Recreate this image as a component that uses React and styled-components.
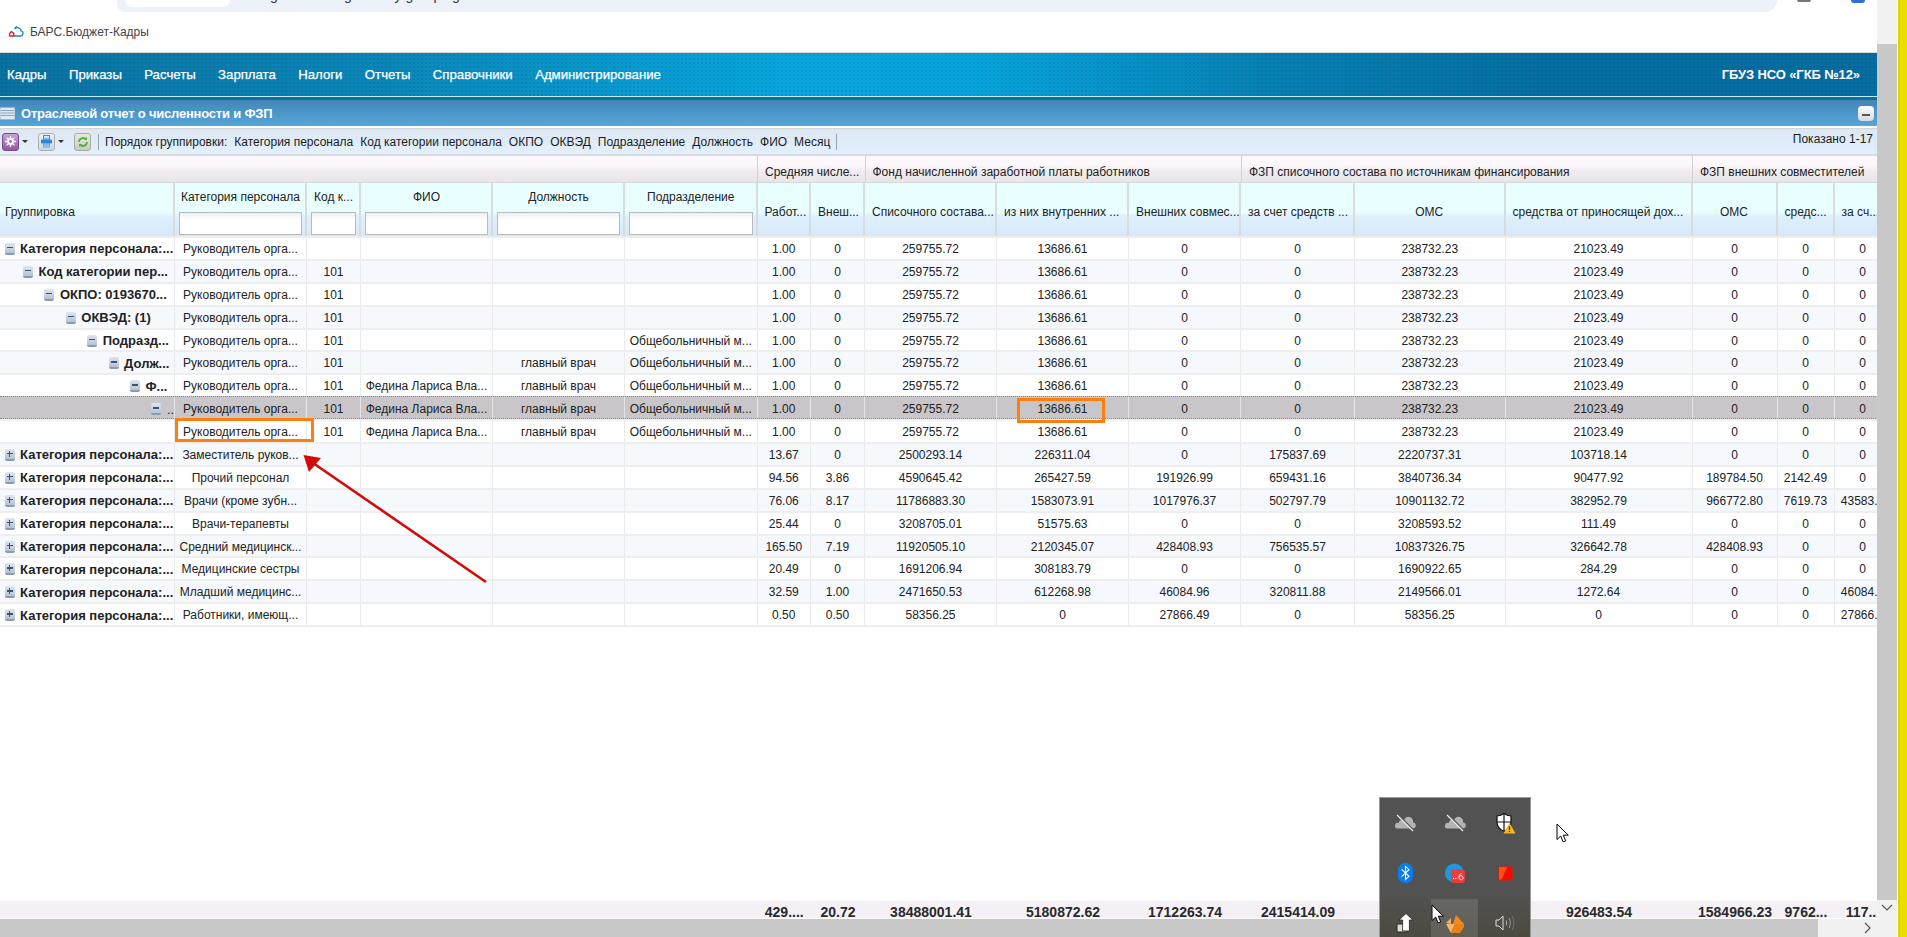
import React from 'react';
import styled, { createGlobalStyle } from 'styled-components';

const GRID = '175px 132px 54px 132px 132px 132.5px 53.5px 54px 132px 132px 112px 114px 150.5px 187px 85px 57px 57px';

const GlobalStyle = createGlobalStyle`
  html, body { margin: 0; padding: 0; height: 100%; overflow: hidden; background: #fff; }
  body { font-family: "Liberation Sans", Arial, sans-serif; font-size: 12px; color: #222; }
  * { box-sizing: border-box; }
`;

const Page = styled.div`
  position: relative;
  display: flex;
  width: 1907px;
  height: 937px;
  overflow: hidden;
`;
const Main = styled.div`
  display: flex;
  flex-direction: column;
  width: 1877px;
  height: 100%;
  overflow: hidden;
`;

const BrowserBar = styled.div`
  display: flex;
  height: 12px;
  flex: none;
  padding-left: 117px;
  overflow: hidden;
`;
const UrlPill = styled.div`
  display: flex;
  flex: none;
  width: 1660px;
  height: 12px;
  padding-left: 8px;
  background: #edf2fa;
  border-radius: 0 0 18px 12px;
  overflow: hidden;
`;
const UrlChip = styled.div`
  width: 105px;
  height: 7px;
  background: #fff;
  border-radius: 0 0 10px 10px;
`;
const UrlText = styled.div`
  margin: -15px 0 0 40px;
  font-size: 14px;
  line-height: 20px;
  color: #333;
  white-space: nowrap;
`;
const BarStub = styled.span`
  flex: none;
  width: 14px;
  height: ${p => p.$h}px;
  margin-left: ${p => p.$gap}px;
  background: ${p => p.$c};
  border-radius: 0 0 5px 5px;
`;

const AppTitle = styled.div`
  display: flex;
  align-items: center;
  gap: 6px;
  flex: none;
  height: 41px;
  padding: 0 0 0 8px;
  font-size: 12px;
  color: #444;
  border-bottom: 1px solid #d8d8d8;
`;

const Nav = styled.nav`
  display: flex;
  align-items: center;
  flex: none;
  height: 44px;
  padding: 0 17px 0 7px;
  gap: 22.4px;
  color: #fff;
  font-size: 13.2px;
  -webkit-text-stroke: 0.25px #fff;
  background:
    radial-gradient(rgba(0, 0, 0, 0.08) 1px, transparent 1.2px) 0 0 / 4px 4px,
    linear-gradient(90deg, #0a72a0 0%, #0a86b8 20%, #07a6de 42%, #05a4dc 52%, #0780b4 68%, #056fa3 82%, #056da0 100%);
  border-bottom: 1px solid #bff0ff;
`;
const NavOrg = styled.span`
  margin-left: auto;
  font-size: 13px;
  font-weight: 700;
  letter-spacing: -0.1px;
  -webkit-text-stroke: 0;
`;

const PanelTitle = styled.div`
  display: flex;
  align-items: center;
  gap: 6px;
  flex: none;
  height: 29px;
  padding: 3px 3px 0 0;
  color: #fff;
  font-size: 13px;
  font-weight: 700;
  letter-spacing: -0.2px;
  background: linear-gradient(180deg, #0e6f9e 0, #0e6f9e 3px, #4486b9 3px, #55a6d8 100%);
`;
const CollapseBtn = styled.div`
  display: flex;
  align-items: center;
  justify-content: center;
  margin-left: auto;
  width: 16px;
  height: 15px;
  border-radius: 4px;
  background: linear-gradient(180deg, #fff, #d6d8dc);
  &::before { content: ''; width: 8px; height: 2px; margin-top: 3px; background: #555; }
`;

const Toolbar = styled.div`
  display: flex;
  align-items: center;
  flex: none;
  height: 28px;
  margin-top: 2px;
  padding: 0 4px 0 2px;
  font-size: 12px;
  color: #1c1c1c;
  border-top: 1px solid #cfd6dc;
  border-bottom: 2px solid #d6dbe0;
  background: linear-gradient(180deg, #dce7f2, #e3f0fe);
`;
const ToolButton = styled.div`
  display: flex;
  align-items: center;
  justify-content: center;
  width: 17px;
  height: 18px;
  border-radius: 3px;
  border: 1px solid ${p => p.$edge};
  background: ${p => p.$bg};
`;
const Caret = styled.span`
  width: 0;
  height: 0;
  margin: 0 ${p => p.$after}px 0 3px;
  border-left: 3px solid transparent;
  border-right: 3px solid transparent;
  border-top: 3px solid #333;
`;
const ToolSep = styled.span`
  width: 1px;
  height: 16px;
  margin: ${p => p.$margin};
  background: #9aa4ac;
`;
const GroupLabel = styled.span`
  margin-right: 7px;
  white-space: nowrap;
`;
const Shown = styled.span`
  margin-left: auto;
  margin-top: -5px;
`;

const GridRow = styled.div`
  display: grid;
  grid-template-columns: ${GRID};
  width: 1890px;
  flex: none;
`;
const BandRow = styled.div`
  display: flex;
  flex: none;
  width: 1890px;
  height: 26px;
  background: linear-gradient(180deg, #fdf8fd 0%, #fbf7fb 35%, #efebef 60%, #e9e6ea 100%);
`;
const Band = styled.div`
  display: flex;
  align-items: center;
  width: ${p => p.$w}px;
  padding: 6px 0 0 7px;
  white-space: nowrap;
  overflow: hidden;
  border-left: ${p => (p.$first ? 'none' : '1px solid #d2d2d6')};
`;
const HeadRow = styled(GridRow)`
  height: 54px;
  border-top: 1px solid #d4d8dc;
  background: linear-gradient(180deg, #e9ffff 0%, #e9ffff 55%, #dff1ff 62%, #d8e8f8 100%);
`;
const HeadCell = styled.div`
  display: flex;
  flex-direction: column;
  align-items: ${p => (p.$center ? 'center' : 'flex-start')};
  justify-content: center;
  padding: 4px 0 0 ${p => (p.$plain ? '5px' : p.$left ? '7px' : '0')};
  border-right: 2px solid #d8dcde;
  overflow: hidden;
  white-space: nowrap;
`;
const FilterCell = styled(HeadCell)`
  align-items: stretch;
  justify-content: flex-start;
  padding: 0 3px 0 4px;
  text-align: center;
`;
const FilterLabel = styled.div`
  height: 29px;
  line-height: 29px;
  overflow: hidden;
`;
const FilterInput = styled.div`
  height: 23px;
  border: 1px solid #b8bcc0;
  background: linear-gradient(180deg, #eceef0 0, #fff 7px);
`;

const DataRow = styled(GridRow)`
  height: 22.9px;
  align-items: stretch;
  border-top: 2px solid #eeeeee;
  background: ${p => (p.$selected ? '#c9c6ca' : p.$alt ? '#f5f8fc' : '#fff')};
  ${p => p.$selected && 'border-top: 1px dotted #888; border-bottom: 1px dotted #888;'}
`;
const Cell = styled.div`
  display: flex;
  align-items: center;
  justify-content: center;
  padding-top: ${p => (p.$selected ? 3 : 1)}px;
  border-right: 1px solid ${p => (p.$selected ? '#e4e4e6' : '#e9eaec')};
  white-space: nowrap;
  overflow: hidden;
`;
const GroupCell = styled(Cell)`
  justify-content: flex-start;
  gap: 5.5px;
  font-size: 13px;
  font-weight: ${p => (p.$leaf ? 400 : 700)};
`;
const TreeBox = styled.span`
  position: relative;
  display: block;
  flex: none;
  width: 10px;
  height: 12px;
  border-radius: 2px;
  border-bottom: 2px solid #8a9ab0;
  background: linear-gradient(180deg, #dfe5ee, #b6c3d4);
  &::before {
    content: '';
    position: absolute;
    left: 2px;
    top: 4px;
    width: 6px;
    height: 1.5px;
    background: #3d5470;
  }
  &::after {
    content: '';
    position: absolute;
    left: 4.3px;
    top: 2px;
    width: 1.5px;
    height: 6px;
    background: #3d5470;
    display: ${p => (p.$open ? 'none' : 'block')};
  }
`;

const Spacer = styled.div`
  flex: 1;
  border-top: 2px solid #eeeeee;
`;
const TotalsRow = styled(GridRow)`
  height: 17px;
  padding-top: 5px;
  align-items: center;
  background: #f5f0f5;
  font-size: 14px;
  font-weight: 700;
  color: #2a2a2a;
`;
const TotalCell = styled.div`
  text-align: center;
  white-space: nowrap;
  overflow: hidden;
`;
const HScroll = styled.div`
  display: flex;
  flex: none;
  height: 18px;
  margin-top: 1px;
  background: #f1f1f1;
`;
const HThumb = styled.div`
  width: 1818px;
  background: #c8c8c8;
`;
const HArrow = styled.div`
  display: flex;
  align-items: center;
  justify-content: flex-end;
  flex: 1;
  padding-right: 6px;
`;

const VScroll = styled.div`
  display: flex;
  flex-direction: column;
  flex: none;
  width: 20px;
  height: 100%;
  background: #f1f1f1;
`;
const VThumb = styled.div`
  height: 856px;
  margin-top: 44px;
  background: #c8c8c8;
`;
const VArrow = styled.div`
  display: flex;
  justify-content: center;
  padding-top: 4px;
`;
const Edge = styled.div`
  flex: none;
  width: 10px;
  border-left: 1px solid #fff;
  background: linear-gradient(90deg, #d8cc00, #eadf00 30%);
`;

const Mark = styled.div`
  position: absolute;
  left: ${p => p.$x}px;
  top: ${p => p.$y}px;
  width: ${p => p.$w}px;
  height: ${p => p.$h}px;
  border: 3px solid #ff7f0e;
`;
const Overlay = styled.svg`
  position: absolute;
  left: 0;
  top: 0;
  pointer-events: none;
`;

const Tray = styled.div`
  position: absolute;
  left: 1379px;
  top: 797px;
  display: grid;
  grid-template-columns: repeat(3, 50px);
  grid-auto-rows: 50px;
  width: 152px;
  height: 160px;
  border: 1px solid #999;
  border-bottom: none;
  background: linear-gradient(180deg, #525252 0, #525252 92px, #4c4a40 140px);
`;
const TrayCell = styled.div`
  display: flex;
  align-items: center;
  justify-content: center;
  background: ${p => (p.$hover ? 'rgba(255, 255, 255, 0.12)' : 'transparent')};
  ${p => p.$hover && 'margin: 1px 2px 0 1px; height: 50px;'}
`;

const Logo = () => (
  <svg width="16" height="14" viewBox="0 0 16 14" fill="none">
    <path d="M5.5 11h7a2.6 2.6 0 0 0 .6-5.1A3.6 3.6 0 0 0 6.6 4.2" stroke="#1a86cc" strokeWidth="1.3" />
    <path d="M6.6 3.5 L9 1.3" stroke="#1a86cc" strokeWidth="1.2" />
    <path d="M3.5 6.5 5.7 8.4V11H1.6V8.4Z" stroke="#e0202a" strokeWidth="1.4" strokeLinejoin="round" />
  </svg>
);

const TableIcon = () => (
  <svg width="15" height="13" viewBox="0 0 15 13">
    <rect x="0" y="0.5" width="15" height="12" rx="1" fill="#dfe9f3" stroke="#9eb6cc" />
    <path d="M1 3.5h13M1 6h13M1 8.5h13" stroke="#8fa5bb" strokeWidth="1" />
  </svg>
);

const CogGlyph = () => (
  <svg width="11" height="11" viewBox="0 0 11 11">
    <circle cx="5.5" cy="5.5" r="3.4" fill="#fff" />
    <path d="M5.5 0v2.4M5.5 8.6V11M0 5.5h2.4M8.6 5.5H11M1.6 1.6l1.7 1.7M7.7 7.7l1.7 1.7M9.4 1.6 7.7 3.3M3.3 7.7 1.6 9.4" stroke="#fff" strokeWidth="1.3" />
    <circle cx="5.5" cy="5.5" r="1.4" fill="#a06bb8" />
  </svg>
);
const PrintGlyph = () => (
  <svg width="11" height="13" viewBox="0 0 11 13">
    <rect x="2.5" y="0.5" width="6" height="3.5" fill="#cfe6fb" stroke="#3b8fd8" />
    <rect x="0" y="4.5" width="11" height="4" rx="1" fill="#2f86d8" />
    <rect x="2.5" y="9" width="6" height="3" fill="#9cc8f0" stroke="#3b8fd8" strokeWidth="0.6" />
  </svg>
);
const RefreshGlyph = () => (
  <svg width="12" height="12" viewBox="0 0 12 12" fill="none">
    <path d="M2 6a4 4 0 0 1 7-2.6M10 6a4 4 0 0 1-7 2.6" stroke="#4fb03a" strokeWidth="1.8" />
    <path d="M9.9 0.8v3.2H6.8ZM2.1 11.2V8h3.1Z" fill="#4fb03a" />
  </svg>
);

const CloudOff = () => (
  <svg width="22" height="18" viewBox="0 0 22 18" fill="none">
    <path d="M3 14.5h15.5a3 3 0 0 0 .5-6A4.6 4.6 0 0 0 10 6.4 3.7 3.7 0 0 0 4.6 9 2.8 2.8 0 0 0 3 14.5Z" fill="#b4b4b4" />
    <path d="M4 1 20 17" stroke="#555" strokeWidth="2.4" />
    <path d="M3 1 19 17" stroke="#f5f5f5" strokeWidth="1.1" />
  </svg>
);
const ShieldWarn = () => (
  <svg width="22" height="22" viewBox="0 0 22 22">
    <path d="M10 1.5c2.2 1.6 4.3 2.3 7 2.5v6c0 4.6-2.9 7.7-7 9.2-4.1-1.5-7-4.6-7-9.2V4c2.7-.2 4.8-.9 7-2.5Z" fill="#fff" stroke="#111" strokeWidth="1.2" />
    <path d="M10 2v17M3 10h14" stroke="#111" strokeWidth="1.2" />
    <path d="M15.5 11 21.5 21.5H9.5Z" fill="#f5b81e" />
    <path d="M15.5 14.5v3.4M15.5 19v1" stroke="#222" strokeWidth="1.2" />
  </svg>
);
const BluetoothIcon = () => (
  <svg width="15" height="20" viewBox="0 0 15 20">
    <rect width="15" height="20" rx="7" fill="#0a7cf0" />
    <path d="M3.6 6.4 11 13.3 7.5 16.6V3.4L11 6.7 3.6 13.6" fill="none" stroke="#fff" strokeWidth="1.1" />
  </svg>
);
const BadgeIcon = () => (
  <svg width="20" height="20" viewBox="0 0 20 20">
    <circle cx="9.5" cy="10" r="9.5" fill="#1f97d8" />
    <rect x="6" y="6.5" width="14" height="13.5" rx="3" fill="#ee3a3c" />
    <circle cx="8.6" cy="15.5" r="0.7" fill="#fff" />
    <circle cx="10.8" cy="15.5" r="0.7" fill="#fff" />
    <path d="M16.6 10.6c-1.6 0-2.6 1.3-2.6 3.6 0 1.6.8 2.6 2 2.6s2-.9 2-2.1-.8-2-1.9-2c-1 0-1.8.7-2 1.6" fill="none" stroke="#fff" strokeWidth="0.9" />
  </svg>
);
const RedSquare = () => (
  <svg width="15" height="15" viewBox="0 0 15 15">
    <rect x="0.5" y="0.5" width="14" height="14" rx="1.5" fill="#f20d00" />
    <path d="M1 2a1 1 0 0 1 1-1h7L3.5 13.5H1Z" fill="#ff4f12" />
  </svg>
);
const UploadIcon = () => (
  <svg width="18" height="20" viewBox="0 0 18 20">
    <rect x="1" y="11" width="10" height="8" rx="1.5" fill="#ddd" stroke="#222" />
    <path d="M10 0.5 17 7h-3.6v11H6.6V7H3Z" fill="#fff" stroke="#222" strokeWidth="0.8" />
  </svg>
);
const FoxIcon = () => (
  <svg width="18" height="18" viewBox="0 0 18 18">
    <path d="M0 8 5 3v6Z" fill="#f6ad5c" />
    <path d="M10 0 18 9H7Z" fill="#ef8a20" />
    <path d="M0 9h9L5 18Z" fill="#f8b468" />
    <path d="M9 9h9v3l-4 6H5Z" fill="#ea8216" />
  </svg>
);
const Speaker = () => (
  <svg width="20" height="18" viewBox="0 0 20 18" fill="none" stroke="#ddd" strokeWidth="1">
    <path d="M1 6h3l4-4v14l-4-4H1Z" />
    <path d="M11 6.5c1 1.5 1 3.5 0 5" stroke="#bbb" />
    <path d="M14 4c1.8 3 1.8 7 0 10" stroke="#999" />
    <path d="M17 2c2.6 4 2.6 10 0 14" stroke="#777" />
  </svg>
);
const Cursor = ({ x, y }) => (
  <Overlay width="14" height="21" viewBox="0 0 14 21" style={{ left: x, top: y }}>
    <path d="M1 1v15.5l3.7-3.4 2.4 5.8 2.6-1.1-2.4-5.6h5Z" fill="#fff" stroke="#000" strokeWidth="1" />
  </Overlay>
);

const NAV = ['Кадры', 'Приказы', 'Расчеты', 'Зарплата', 'Налоги', 'Отчеты', 'Справочники', 'Администрирование'];
const ORDER = ['Категория персонала', 'Код категории персонала', 'ОКПО', 'ОКВЭД', 'Подразделение', 'Должность', 'ФИО', 'Месяц'];
const FILTERS = ['Категория персонала', 'Код к...', 'ФИО', 'Должность', 'Подразделение'];
const HEADS = [
  ['Работ...'],
  ['Внеш...'],
  ['Списочного состава...'],
  ['из них внутренних ...'],
  ['Внешних совмес...'],
  ['за счет средств ...'],
  ['ОМС', true],
  ['средства от приносящей дох...'],
  ['ОМС', true],
  ['средс...'],
  ['за сч...'],
];
const BANDS = [
  ['', 757],
  ['Средняя числе...', 107.5],
  ['Фонд начисленной заработной платы работников', 376.5],
  ['ФЗП списочного состава по источникам финансирования', 451],
  ['ФЗП внешних совместителей', 198],
];

const BOSS = ['1.00', '0', '259755.72', '13686.61', '0', '0', '238732.23', '21023.49', '0', '0', '0'];
const CHIEF = 'Руководитель орга...';
const FEDINA = 'Федина Лариса Вла...';
const GEN = 'Общебольничный м...';
const CAT = 'Категория персонала:...';
const ROWS = [
  { label: CAT, level: 0, open: true, cols: [CHIEF, '', '', '', ''], nums: BOSS },
  { label: 'Код категории пер...', level: 1, open: true, cols: [CHIEF, '101', '', '', ''], nums: BOSS },
  { label: 'ОКПО: 0193670...', level: 2, open: true, cols: [CHIEF, '101', '', '', ''], nums: BOSS },
  { label: 'ОКВЭД: (1)', level: 3, open: true, cols: [CHIEF, '101', '', '', ''], nums: BOSS },
  { label: 'Подразд...', level: 4, open: true, cols: [CHIEF, '101', '', '', GEN], nums: BOSS },
  { label: 'Долж...', level: 5, open: true, cols: [CHIEF, '101', '', 'главный врач', GEN], nums: BOSS },
  { label: 'Ф...', level: 6, open: true, cols: [CHIEF, '101', FEDINA, 'главный врач', GEN], nums: BOSS },
  { label: '..', level: 7, open: true, thin: true, selected: true, cols: [CHIEF, '101', FEDINA, 'главный врач', GEN], nums: BOSS },
  { label: '', level: 0, leaf: true, cols: [CHIEF, '101', FEDINA, 'главный врач', GEN], nums: BOSS },
  { label: CAT, level: 0, cols: ['Заместитель руков...', '', '', '', ''], nums: ['13.67', '0', '2500293.14', '226311.04', '0', '175837.69', '2220737.31', '103718.14', '0', '0', '0'] },
  { label: CAT, level: 0, cols: ['Прочий персонал', '', '', '', ''], nums: ['94.56', '3.86', '4590645.42', '265427.59', '191926.99', '659431.16', '3840736.34', '90477.92', '189784.50', '2142.49', '0'] },
  { label: CAT, level: 0, cols: ['Врачи (кроме зубн...', '', '', '', ''], nums: ['76.06', '8.17', '11786883.30', '1583073.91', '1017976.37', '502797.79', '10901132.72', '382952.79', '966772.80', '7619.73', '43583...'] },
  { label: CAT, level: 0, cols: ['Врачи-терапевты', '', '', '', ''], nums: ['25.44', '0', '3208705.01', '51575.63', '0', '0', '3208593.52', '111.49', '0', '0', '0'] },
  { label: CAT, level: 0, cols: ['Средний медицинск...', '', '', '', ''], nums: ['165.50', '7.19', '11920505.10', '2120345.07', '428408.93', '756535.57', '10837326.75', '326642.78', '428408.93', '0', '0'] },
  { label: CAT, level: 0, cols: ['Медицинские сестры', '', '', '', ''], nums: ['20.49', '0', '1691206.94', '308183.79', '0', '0', '1690922.65', '284.29', '0', '0', '0'] },
  { label: CAT, level: 0, cols: ['Младший медицинс...', '', '', '', ''], nums: ['32.59', '1.00', '2471650.53', '612268.98', '46084.96', '320811.88', '2149566.01', '1272.64', '0', '0', '46084...'] },
  { label: CAT, level: 0, cols: ['Работники, имеющ...', '', '', '', ''], nums: ['0.50', '0.50', '58356.25', '0', '27866.49', '0', '58356.25', '0', '0', '0', '27866...'] },
];
const TOTALS = ['429....', '20.72', '38488001.41', '5180872.62', '1712263.74', '2415414.09', '35146103.78', '926483.54', '1584966.23', '9762...', '117...'];

// tree indent: the first level sits a bit further right than the rest of the ladder
const indent = level => (level === 0 ? 4.6 : 1.6 + level * 21.4);

export default function App() {
  return (
    <Page>
      <GlobalStyle />
      <Main>
        <BrowserBar>
          <UrlPill>
            <UrlChip />
            <UrlText>gu.bars/budget/kadry/grouping</UrlText>
          </UrlPill>
          <BarStub $gap={20} $h={2} $c="#777" />
          <BarStub $gap={40} $h={3} $c="#2f6fd8" />
        </BrowserBar>
        <AppTitle>
          <Logo />
          <span>БАРС.Бюджет-Кадры</span>
        </AppTitle>
        <Nav>
          {NAV.map(n => <span key={n}>{n}</span>)}
          <NavOrg>ГБУЗ НСО «ГКБ №12»</NavOrg>
        </Nav>
        <PanelTitle>
          <TableIcon />
          <span>Отраслевой отчет о численности и ФЗП</span>
          <CollapseBtn />
        </PanelTitle>
        <Toolbar>
          <ToolButton $edge="#7a4a8c" $bg="linear-gradient(180deg, #c9a0d8, #8d5aa5)"><CogGlyph /></ToolButton>
          <Caret $after={10} />
          <ToolButton $edge="#a9b0b6" $bg="linear-gradient(180deg, #eef1f4, #cfd5da)"><PrintGlyph /></ToolButton>
          <Caret $after={10} />
          <ToolButton $edge="#a9aca2" $bg="linear-gradient(180deg, #e8eadf, #c9ccc2)"><RefreshGlyph /></ToolButton>
          <ToolSep $margin="0 6px 0 7px" />
          <GroupLabel>Порядок группировки:</GroupLabel>
          {ORDER.map(o => <GroupLabel key={o}>{o}</GroupLabel>)}
          <ToolSep $margin="0 0 0 -1px" />
          <Shown>Показано 1-17</Shown>
        </Toolbar>
        <BandRow>
          {BANDS.map(([t, w], i) => <Band key={i} $w={w} $first={i === 0}>{t}</Band>)}
        </BandRow>
        <HeadRow>
          <HeadCell $plain>Группировка</HeadCell>
          {FILTERS.map(t => (
            <FilterCell key={t}>
              <FilterLabel>{t}</FilterLabel>
              <FilterInput />
            </FilterCell>
          ))}
          {HEADS.map(([t, c], i) => <HeadCell key={i} $left={!c} $center={c}>{t}</HeadCell>)}
        </HeadRow>
        {ROWS.map((r, i) => (
          <DataRow key={i} $alt={i % 2 === 1} $selected={r.selected}>
            <GroupCell $leaf={r.thin} $selected={r.selected} style={{ paddingLeft: indent(r.level) }}>
              {!r.leaf && <TreeBox $open={r.open} />}
              {r.label && <span>{r.label}</span>}
            </GroupCell>
            {r.cols.map((c, j) => <Cell key={j} $selected={r.selected}>{c}</Cell>)}
            {r.nums.map((n, j) => <Cell key={j} $selected={r.selected}>{n}</Cell>)}
          </DataRow>
        ))}
        <Spacer />
        <TotalsRow>
          <span /><span /><span /><span /><span /><span />
          {TOTALS.map((t, i) => <TotalCell key={i}>{t}</TotalCell>)}
        </TotalsRow>
        <HScroll>
          <HThumb />
          <HArrow>
            <svg width="7" height="12" viewBox="0 0 7 12" fill="none"><path d="M1 1l5 5-5 5" stroke="#555" strokeWidth="1.2" /></svg>
          </HArrow>
        </HScroll>
      </Main>
      <VScroll>
        <VThumb />
        <VArrow>
          <svg width="12" height="7" viewBox="0 0 12 7" fill="none"><path d="M1 1l5 5 5-5" stroke="#555" strokeWidth="1.2" /></svg>
        </VArrow>
      </VScroll>
      <Edge />

      <Mark $x={174.5} $y={418} $w={139} $h={24} />
      <Mark $x={1017} $y={398} $w={88} $h={25} />
      <Overlay width="1907" height="937">
        <path d="M486 582 L313 463" stroke="#d20a0a" strokeWidth="2.6" fill="none" />
        <path d="M303.5 455 L321 458 L309 472 Z" fill="#d20a0a" />
      </Overlay>

      <Tray>
        <TrayCell><CloudOff /></TrayCell>
        <TrayCell><CloudOff /></TrayCell>
        <TrayCell><ShieldWarn /></TrayCell>
        <TrayCell><BluetoothIcon /></TrayCell>
        <TrayCell><BadgeIcon /></TrayCell>
        <TrayCell><RedSquare /></TrayCell>
        <TrayCell><UploadIcon /></TrayCell>
        <TrayCell $hover><FoxIcon /></TrayCell>
        <TrayCell><Speaker /></TrayCell>
      </Tray>
      <Cursor x={1431} y={904} />
      <Cursor x={1556} y={823} />
    </Page>
  );
}
